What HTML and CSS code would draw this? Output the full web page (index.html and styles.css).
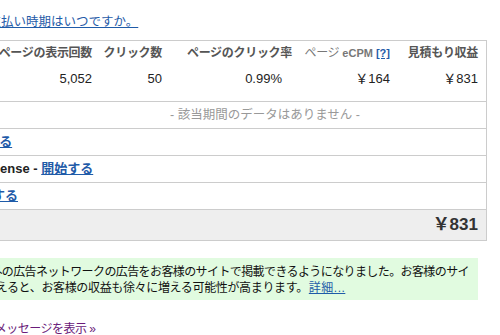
FILE: index.html
```html
<!DOCTYPE html>
<html lang="ja">
<head>
  <meta charset="utf-8">
  <title>AdSense レポート</title>
  <link rel="stylesheet" href="styles.css">
</head>
<body>
  <div class="help-line">
    <a class="help-link" href="#">お支払い時期はいつですか。</a>
  </div>

  <div class="report">
    <div class="report-head">
      <div class="cell">ページの表示回数</div>
      <div class="cell">クリック数</div>
      <div class="cell">ページのクリック率</div>
      <div class="cell">ページ <span class="ecpm">eCPM</span> <a class="hint" href="#">[?]</a></div>
      <div class="cell">見積もり収益</div>
    </div>
    <div class="report-data">
      <div class="cell">5,052</div>
      <div class="cell">50</div>
      <div class="cell cell-rate">0.99%</div>
      <div class="cell">￥164</div>
      <div class="cell">￥831</div>
    </div>
    <div class="row row-empty">- 該当期間のデータはありません -</div>
    <div class="row"><a class="row-link shift-3" href="#">有効にする</a></div>
    <div class="row"><span class="shift-2">AdSense</span> - <a class="row-link" href="#">開始する</a></div>
    <div class="row"><a class="row-link shift-1" href="#">開始する</a></div>
    <div class="row row-total">￥831</div>
  </div>

  <div class="notice">
    <p class="notice-line line-1">以外の広告ネットワークの広告をお客様のサイトで掲載できるようになりました。お客様のサイ</p>
    <p class="notice-line line-2">増えると、お客様の収益も徐々に増える可能性が高まります。<a class="more-info" href="#">詳細...</a></p>
  </div>

  <div class="more-line">
    <a class="more-link" href="#">すべてのメッセージを表示 »</a>
  </div>
</body>
</html>
```

FILE: styles.css
```css
body {
  margin: 0;
  padding: 0;
  width: 500px;
  overflow: hidden;
  font-family: 'Liberation Sans', 'Noto Sans CJK JP', sans-serif;
  font-size: 12px;
  color: #222;
  background-color: #fff;
}

a {
  color: #1f5ba8;
}

.help-line {
  margin-top: 14px;
  line-height: 16px;
  white-space: nowrap;
}

.help-link {
  margin-left: -24px;
  font-size: 12.5px;
}

.report {
  margin-top: 10px;
  margin-left: -14px;
  width: 500px;
  border-top: 1px solid #ccc;
  border-right: 1px solid #ccc;
  border-bottom: 1px solid #ccc;
}

.report-head,
.report-data {
  display: grid;
  grid-template-columns: 114px 70px 130px 98px 88px;
}

.report-head .cell {
  height: 24px;
  line-height: 24px;
  padding-right: 8px;
  text-align: right;
  font-weight: bold;
  color: #555;
  white-space: nowrap;
  letter-spacing: -0.3px;
}

.report-head .cell:nth-child(4) {
  font-weight: normal;
  color: #777;
}

.ecpm {
  font-size: 11px;
  font-weight: bold;
  color: #777;
  letter-spacing: 0;
}

.hint {
  font-size: 11px;
  font-weight: bold;
  letter-spacing: 0;
}

.report-data .cell {
  padding: 6px 8px 14px 0;
  line-height: 16px;
  text-align: right;
  font-size: 13px;
  color: #222;
}

.report-data .cell-rate {
  padding-right: 18px;
}

.row {
  height: 26px;
  line-height: 26px;
  border-top: 1px solid #ccc;
  padding-left: 14px;
  font-size: 13px;
  font-weight: bold;
  color: #222;
  white-space: nowrap;
}

.row-empty {
  padding-left: 184px;
  font-weight: normal;
  font-size: 12.5px;
  color: #999;
}

.row-link {
  font-weight: bold;
}

.shift-1 {
  margin-left: -34px;
}

.shift-2 {
  margin-left: -26px;
}

.shift-3 {
  margin-left: -53px;
}

.row-total {
  height: 30px;
  line-height: 30px;
  padding-right: 8px;
  text-align: right;
  background-color: #eee;
  font-size: 17px;
  color: #333;
}

.notice {
  margin-top: 17px;
  margin-right: 22px;
  padding: 6px 0 4px;
  background-color: #e1fbe0;
}

.notice-line {
  margin: 0;
  line-height: 16px;
  white-space: nowrap;
  color: #111;
}

.line-1 {
  margin-left: -21px;
  letter-spacing: -0.6px;
}

.line-2 {
  margin-left: -16px;
  letter-spacing: -0.35px;
}

.more-info {
  margin-left: 1px;
  letter-spacing: 0.5px;
}

.more-line {
  margin-top: 21px;
  line-height: 16px;
  white-space: nowrap;
}

.more-link {
  margin-left: -50px;
  letter-spacing: -0.5px;
  color: #6a1b7a;
  text-decoration: none;
}
```
